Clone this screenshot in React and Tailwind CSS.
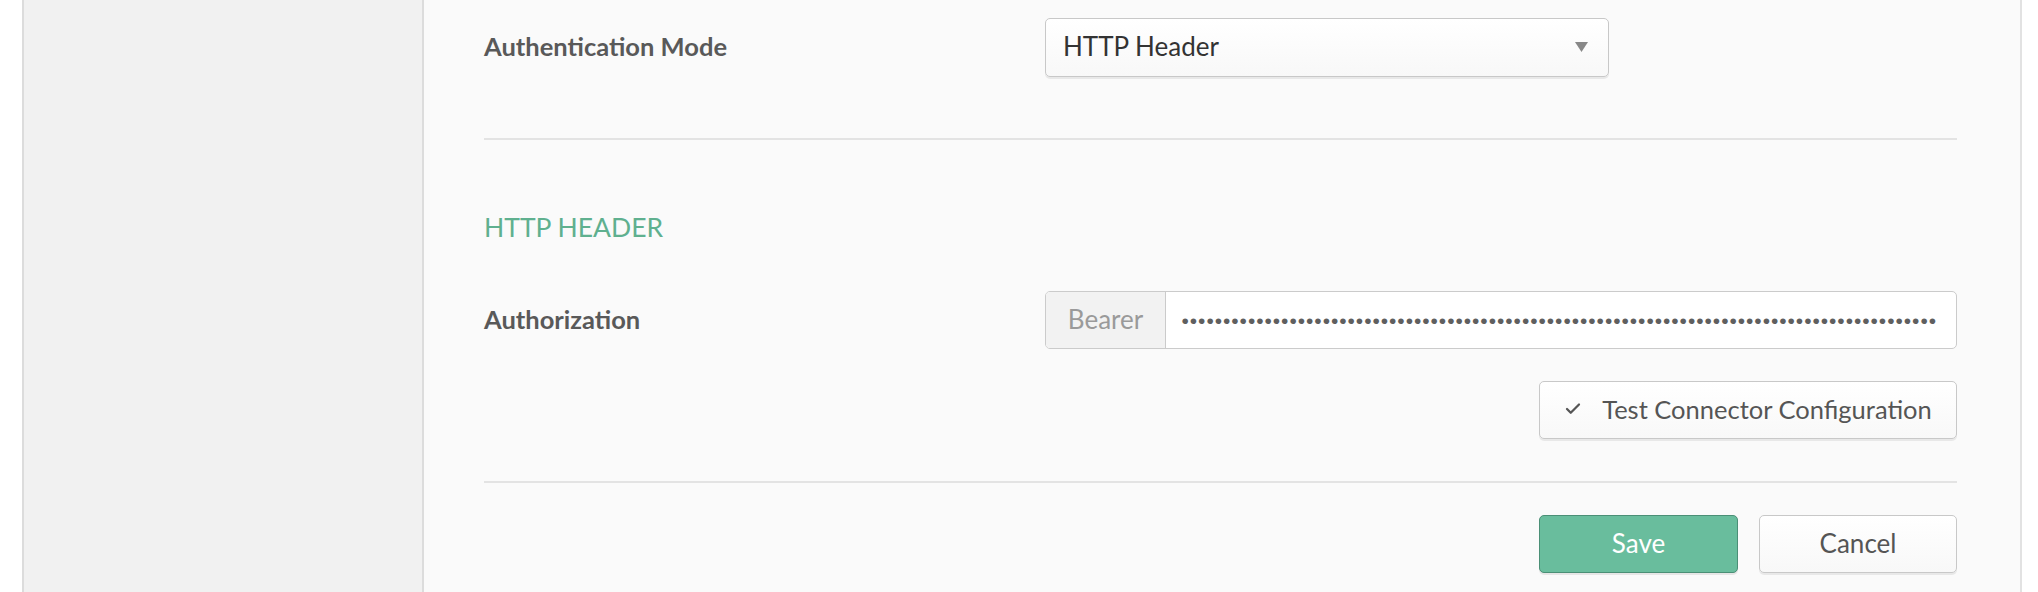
import { Check } from "lucide-react";

const dots = "•".repeat(91);

const Label = ({ children }) => (
  <div className="w-[561px] shrink-0 pb-[2px] text-[25.5px] font-bold text-[#595959]">{children}</div>
);

const App = () => {
  return (
    <div className="flex h-[592px] w-[2038px] overflow-hidden bg-white font-[Lato,sans-serif]">
      {/* left gutter + sidebar */}
      <div className="w-[22px] shrink-0 bg-white" />
      <div className="w-[402px] shrink-0 border-x-2 border-[#dcdcdc] bg-[#f1f1f1]" />

      {/* main form */}
      <div className="min-w-0 flex-1 border-r-2 border-[#e2e2e2] bg-[#fafafa] pl-[60px] pr-[63px] pt-[18px]">
        {/* Authentication mode */}
        <div className="flex items-center">
          <Label>Authentication Mode</Label>
          <div className="flex h-[59px] w-[564px] items-center justify-between rounded-[5px] border border-[#c8c8c8] bg-gradient-to-b from-white to-[#f8f8f8] pb-[2px] pl-[17px] pr-[20px] shadow-[0_2px_0_rgba(0,0,0,0.07)]">
            <span className="text-[26px] text-[#333]">HTTP Header</span>
            <svg width="13" height="10" viewBox="0 0 13 10">
              <polygon points="0,0 13,0 6.5,10" fill="#888" />
            </svg>
          </div>
        </div>

        <div className="mt-[61px] h-[2px] bg-[#e3e3e3]" />

        {/* HTTP header section */}
        <div className="mt-[72px] text-[26.5px] leading-[30px] uppercase text-[#5fb08f]">HTTP Header</div>

        <div className="mt-[49px] flex items-center">
          <Label>Authorization</Label>
          <div className="flex h-[58px] min-w-0 flex-1 overflow-hidden rounded-[5px] border border-[#cbcbcb] bg-white">
            <div className="flex w-[120px] shrink-0 items-center justify-center border-r border-[#cbcbcb] bg-[#f2f2f2] pb-[2px] text-[26px] text-[#9a9a9a]">
              Bearer
            </div>
            <div className="flex min-w-0 flex-1 items-center justify-end overflow-hidden whitespace-nowrap pl-[14px] pr-[19px]">
              <span className="font-[Liberation_Sans,sans-serif] text-[21px] leading-none tracking-[0.95px] text-[#5f5f5f]">{dots}</span>
            </div>
          </div>
        </div>

        <div className="mt-[32px] flex justify-end">
          <button className="flex h-[58px] w-[418px] items-center justify-center gap-[20px] rounded-[5px] border border-[#c8c8c8] bg-gradient-to-b from-white to-[#f8f8f8] pb-[2px] text-[25.5px] text-[#555] shadow-[0_2px_0_rgba(0,0,0,0.07)]">
            <Check size={18} strokeWidth={3} className="text-[#555]" />
            Test Connector Configuration
          </button>
        </div>

        <div className="mt-[42px] h-[2px] bg-[#e3e3e3]" />

        <div className="mt-[32px] flex justify-end gap-[21px]">
          <button className="h-[58px] w-[199px] rounded-[5px] border border-[#4b8f76] bg-[#69bd9d] pb-[2px] text-[26px] text-white shadow-[0_2px_0_rgba(0,0,0,0.08)]">
            Save
          </button>
          <button className="h-[58px] w-[198px] rounded-[5px] border border-[#c8c8c8] bg-gradient-to-b from-white to-[#f8f8f8] pb-[2px] text-[26px] text-[#555] shadow-[0_2px_0_rgba(0,0,0,0.07)]">
            Cancel
          </button>
        </div>
      </div>
      <div className="w-[16px] shrink-0 bg-white" />
    </div>
  );
};

export default App;
